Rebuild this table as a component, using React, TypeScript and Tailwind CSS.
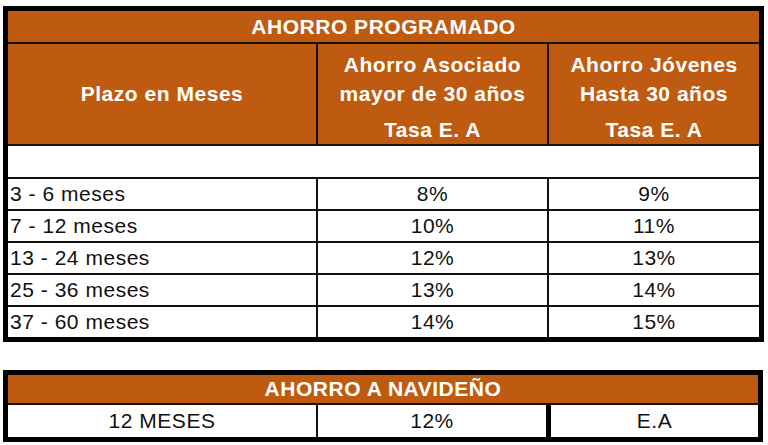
import React from "react";

const rows = [
  { plazo: "3 - 6 meses", asociado: "8%", jovenes: "9%" },
  { plazo: "7 - 12 meses", asociado: "10%", jovenes: "11%" },
  { plazo: "13 - 24 meses", asociado: "12%", jovenes: "13%" },
  { plazo: "25 - 36 meses", asociado: "13%", jovenes: "14%" },
  { plazo: "37 - 60 meses", asociado: "14%", jovenes: "15%" },
];

function HeaderCell({ top, middle }: { top: string; middle: string }): JSX.Element {
  return (
    <div className="flex flex-col items-center pt-[6px] font-bold text-white">
      <div className="h-[29px] leading-[29px]">{top}</div>
      <div className="h-[29px] leading-[29px]">{middle}</div>
      <div className="mt-[7px] h-[29px] leading-[29px]">Tasa E. A</div>
    </div>
  );
}

function App(): JSX.Element {
  return (
    <div
      className="w-[768px] h-[445px] bg-white overflow-hidden pt-[6px] text-[21px] tracking-[0.025em] text-[#111]"
      style={{ fontFamily: '"Liberation Sans", Arial, sans-serif' }}
    >
      {/* ahorro programado */}
      <div className="ml-[3px] w-[761px] border-[5px] border-black">
        <div className="h-[33px] bg-[#bf5b10] border-b-2 border-[#1a1208] flex items-center justify-center font-bold text-white">
          AHORRO PROGRAMADO
        </div>
        <div className="h-[102px] bg-[#bf5b10] border-b-2 border-[#1a1208] flex">
          <div className="w-[310px] border-r-2 border-[#1a1208] flex items-center justify-center font-bold text-white">
            Plazo en Meses
          </div>
          <div className="w-[231px] border-r-2 border-[#1a1208]">
            <HeaderCell top="Ahorro Asociado" middle="mayor de 30 años" />
          </div>
          <div className="flex-1">
            <HeaderCell top="Ahorro Jóvenes" middle="Hasta 30 años" />
          </div>
        </div>
        <div className="h-[33px] border-b-2 border-[#111]" />
        {rows.map((row, i) => (
          <div
            key={row.plazo}
            className={`flex ${
              i === rows.length - 1 ? "h-[30px]" : "h-[32px] border-b-2 border-[#111]"
            }`}
          >
            <div className="w-[310px] border-r-2 border-[#111] pl-[2px] flex items-center">
              {row.plazo}
            </div>
            <div className="w-[231px] border-r-2 border-[#111] flex items-center justify-center">
              {row.asociado}
            </div>
            <div className="flex-1 flex items-center justify-center">{row.jovenes}</div>
          </div>
        ))}
      </div>

      {/* ahorro navideño */}
      <div className="ml-[3px] mt-[28px] w-[760px] border-[5px] border-black">
        <div className="h-[30px] bg-[#bf5b10] border-b-2 border-[#1a1208] flex items-center justify-center font-bold text-white">
          AHORRO A NAVIDEÑO
        </div>
        <div className="h-[32px] flex">
          <div className="w-[310px] border-r-2 border-[#111] flex items-center justify-center">
            12 MESES
          </div>
          <div className="w-[233px] border-r-[5px] border-black flex items-center justify-center">
            12%
          </div>
          <div className="flex-1 flex items-center justify-center">E.A</div>
        </div>
      </div>
    </div>
  );
}

export default App;
